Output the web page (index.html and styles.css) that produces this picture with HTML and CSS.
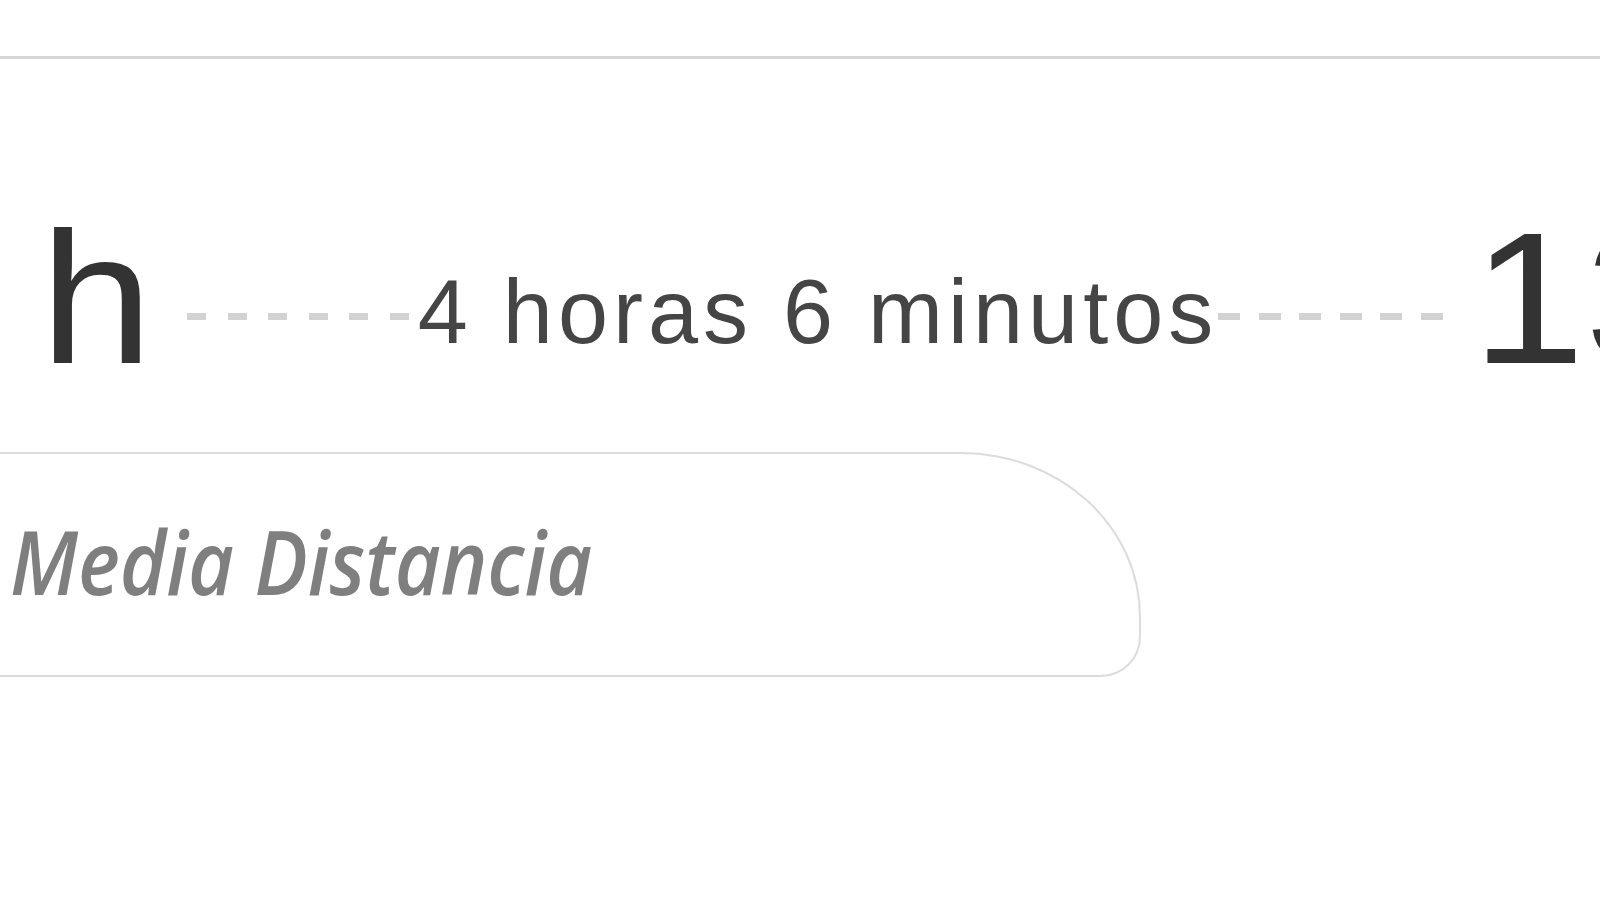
FILE: index.html
```html
<!DOCTYPE html>
<html lang="es">
<head>
<meta charset="utf-8">
<title>Trayecto</title>
<link rel="stylesheet" href="styles.css">
</head>
<body>
  <div class="page">
    <div class="topbar"></div>
    <div class="journey">
      <div class="time time-left"><span class="time-text">h</span></div>
      <div class="middle">
        <span class="dashes dashes-left"></span>
        <span class="duration">4 horas 6 minutos</span>
        <span class="dashes dashes-right"></span>
      </div>
      <div class="time time-right"><span class="time-text">13:12 h</span></div>
    </div>
    <div class="service">
      <span class="service-name">Media Distancia</span>
    </div>
  </div>
</body>
</html>
```

FILE: styles.css
```css
html, body {
  margin: 0;
  padding: 0;
  background: #ffffff;
  overflow: hidden;
}

.page {
  width: 1600px;
  height: 919px;
  overflow: hidden;
  font-family: "Liberation Sans", Arial, sans-serif;
}

.topbar {
  height: 56px;
  border-bottom: 3px solid #d6d6d6;
}

.journey {
  display: flex;
  align-items: flex-start;
  height: 188px;
  margin-top: 145px;
}

.time {
  font-size: 188px;
  line-height: 1;
  color: #333333;
  white-space: nowrap;
}

.time-text {
  display: inline-block;
  transform: scaleX(1.08);
  transform-origin: left center;
}

.time-left {
  margin-left: 40px;
  width: 107px;
  flex: none;
}

.time-right {
  flex: none;
  width: 128px;
}

.middle {
  flex: 1;
  display: flex;
  align-items: flex-start;
  margin: 0 29px 0 40px;
  min-width: 0;
}

.dashes {
  flex: 1;
  height: 7px;
  margin-top: 109px;
}

.dashes-left {
  background: repeating-linear-gradient(90deg, #d2d2d2 0 19px, transparent 19px 40.6px);
}

.dashes-right {
  background: repeating-linear-gradient(270deg, #d2d2d2 0 22px, transparent 22px 40.6px);
}

.duration {
  flex: none;
  margin-top: 63px;
  font-size: 90px;
  line-height: 1;
  letter-spacing: 5px;
  color: #454545;
  background: #ffffff;
  padding: 0 0 0 6px;
  white-space: nowrap;
}

.service {
  margin-top: 60px;
  width: 1139px;
  height: 221px;
  box-sizing: content-box;
  border: 2px solid #dcdcdc;
  border-left: none;
  border-radius: 0 180px 40px 0 / 0 165px 40px 0;
}

.service-name {
  display: inline-block;
  margin: 63px 0 0 10px;
  font-family: "Open Sans", "Noto Sans", sans-serif;
  font-style: italic;
  font-weight: 600;
  font-size: 88px;
  line-height: 1;
  color: #7f7f7f;
  white-space: nowrap;
  transform: scaleX(0.9);
  transform-origin: left center;
}
```
